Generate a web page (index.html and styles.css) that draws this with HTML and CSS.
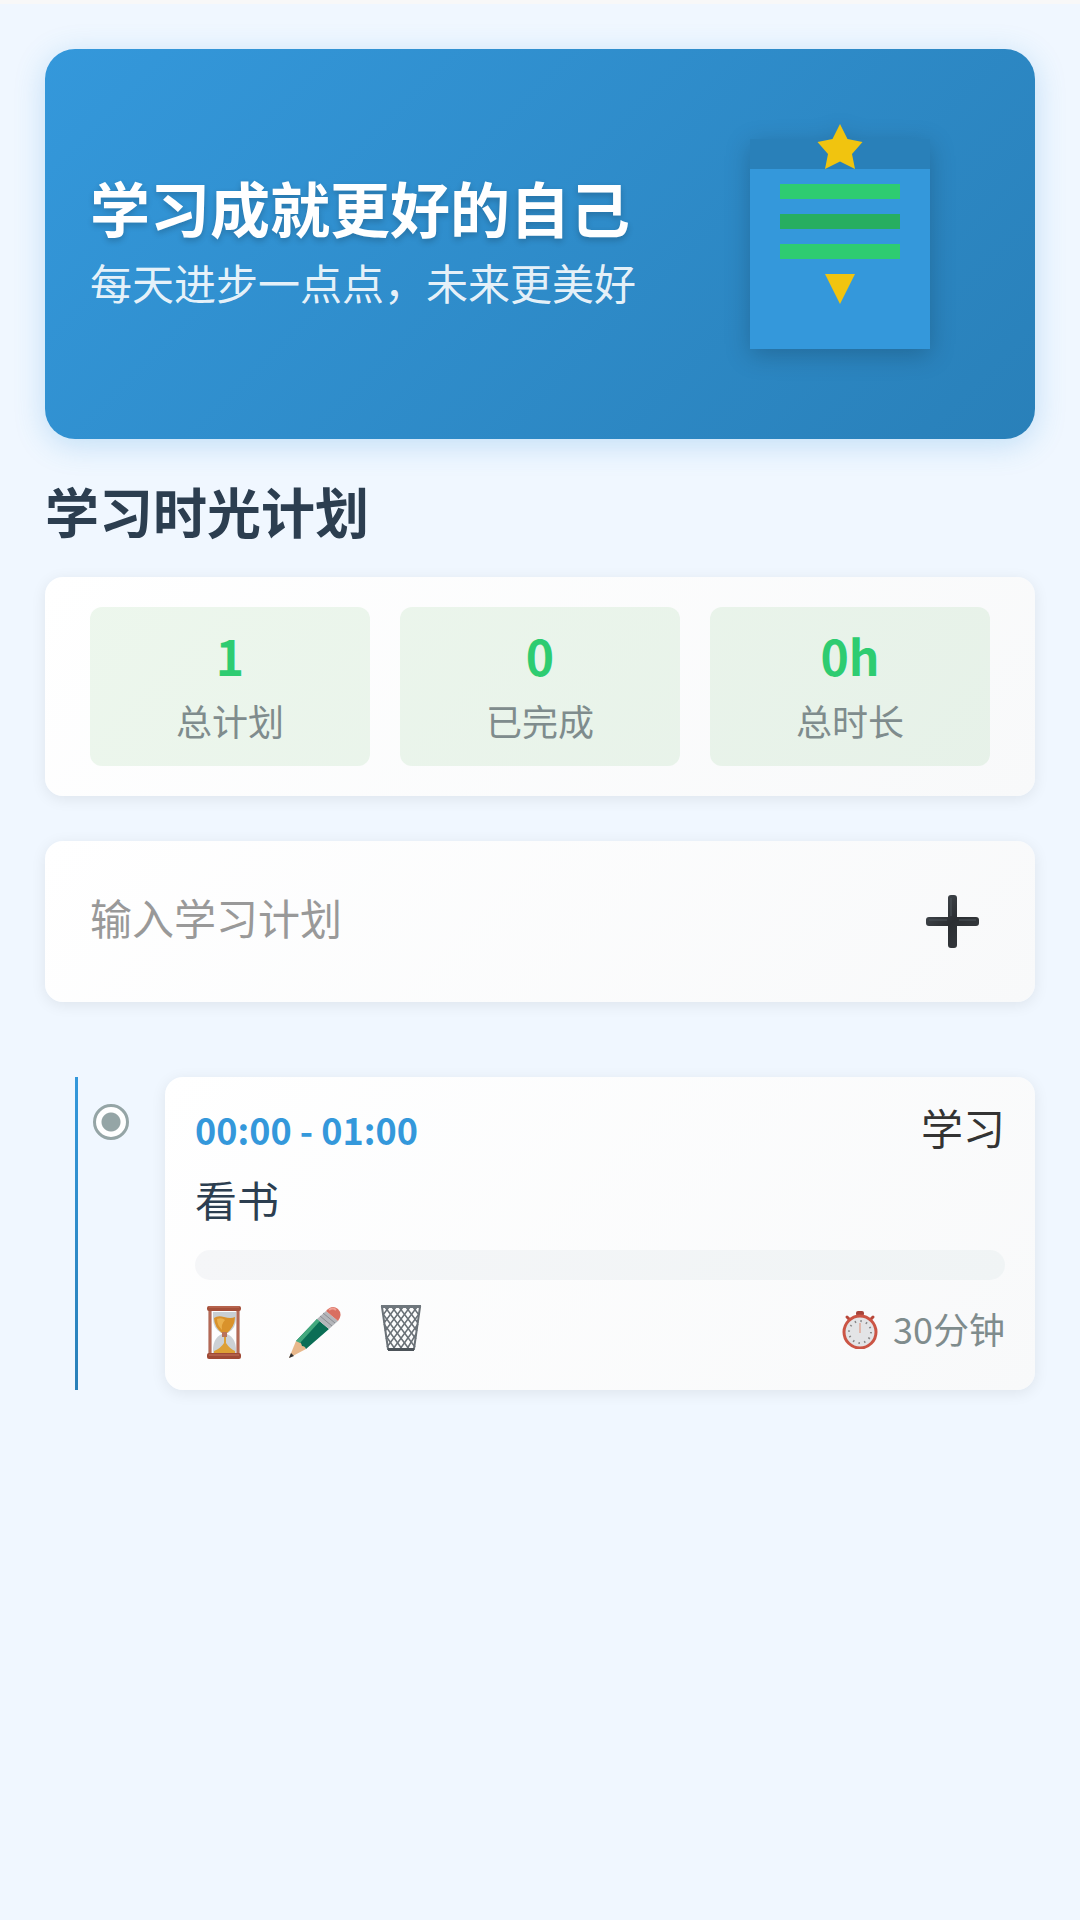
FILE: index.html
```html
<!DOCTYPE html>
<html lang="zh-CN">
<head>
    <meta charset="UTF-8">
    <meta name="viewport" content="width=device-width, initial-scale=1.0">
    <title>学习时光计划</title>
    <link rel="stylesheet" href="styles.css">
</head>
<body>

<main class="container">
    <!-- Banner -->
    <header class="banner">
        <div class="banner-text">
            <p class="banner-title">学习成就更好的自己</p>
            <p class="banner-subtitle">每天进步一点点，未来更美好</p>
        </div>
        <svg class="banner-image" viewBox="0 0 200 200" aria-hidden="true">
            <rect x="40" y="30" width="120" height="140" fill="#3498db"/>
            <rect x="40" y="30" width="120" height="20" fill="#2980b9"/>
            <rect x="60" y="60" width="80" height="10" fill="#2ecc71"/>
            <rect x="60" y="80" width="80" height="10" fill="#27ae60"/>
            <rect x="60" y="100" width="80" height="10" fill="#2ecc71"/>
            <path d="M90 120h20l-10 20z" fill="#f1c40f"/>
            <path d="M100 20l5 10 10 2-7 8 2 10-10-5-10 5 2-10-7-8 10-2z" fill="#f1c40f"/>
        </svg>
    </header>

    <h1 class="page-title">学习时光计划</h1>

    <!-- Statistics -->
    <section class="card stats">
        <div class="stat-item">
            <span class="stat-value" id="totalCount">1</span>
            <span class="stat-label">总计划</span>
        </div>
        <div class="stat-item">
            <span class="stat-value" id="doneCount">0</span>
            <span class="stat-label">已完成</span>
        </div>
        <div class="stat-item">
            <span class="stat-value" id="totalHours">0h</span>
            <span class="stat-label">总时长</span>
        </div>
    </section>

    <!-- Add a plan -->
    <form class="card add-form" onsubmit="return false">
        <input type="text" class="plan-input" placeholder="输入学习计划" aria-label="输入学习计划">
        <button type="submit" class="icon-btn add-btn" aria-label="添加">
            <svg width="61" height="61" viewBox="0 0 61 61" aria-hidden="true">
                <defs>
                    <linearGradient id="plusFill" x1="0" y1="0" x2="1" y2="1">
                        <stop offset="0" stop-color="#4a5157"/>
                        <stop offset="0.5" stop-color="#2b2e32"/>
                        <stop offset="1" stop-color="#393d41"/>
                    </linearGradient>
                </defs>
                <path d="M26 7q0-3 3-3h3q3 0 3 3v19h19q3 0 3 3v3q0 3-3 3H35v19q0 3-3 3h-3q-3 0-3-3V35H7q-3 0-3-3v-3q0-3 3-3h19z" fill="url(#plusFill)"/>
                <path d="M29 7v18M7 29h18M37 29h17" stroke="#4d555b" stroke-width="1" fill="none"/>
            </svg>
        </button>
    </form>

    <!-- Timeline -->
    <section class="timeline">
        <article class="timeline-item">
            <span class="timeline-dot"></span>
            <div class="card plan">
                <div class="plan-row plan-head">
                    <time class="plan-time">00:00 - 01:00</time>
                    <span class="plan-type">学习</span>
                </div>
                <p class="plan-name" id="planName">看书</p>
                <progress class="plan-progress" value="0" max="100" aria-labelledby="planName"></progress>
                <div class="plan-row">
                    <div class="plan-actions">
                        <button type="button" class="icon-btn" aria-label="开始">
                            <svg width="60" height="64" viewBox="0 0 60 64" aria-hidden="true">
                                <path d="M18 16h23v7q0 9-8 14h-7q-8-5-8-14z" fill="#c9cfd3"/>
                                <path d="M18 58q-1-16 9-20h5q10 4 9 20z" fill="#ccd1d5"/>
                                <path d="M19 22q4-3 10-1 7 2 11 0 0 10-9 17h-3q-9-7-9-16z" fill="#d9922b"/>
                                <path d="M22 23q5-2 8 1-4 4-3 10-5-5-5-11z" fill="#eab04c"/>
                                <path d="M29 37h2v10q4 6 9 8v3H19v-3q7-3 10-8z" fill="#dda035"/>
                                <path d="M27 36h5v5h-5z" fill="#b9735a"/>
                                <path d="M15 14v44M43 14v44" stroke="#a04f3a" stroke-width="3"/>
                                <path d="M15 14v44M43 14v44" stroke="#c98571" stroke-width="1"/>
                                <rect x="12" y="10" width="34" height="5" rx="2" fill="#a5503a"/>
                                <rect x="12" y="57" width="34" height="6" rx="2" fill="#a04a35"/>
                                <path d="M14 11h30M14 59h30" stroke="#c4745e" stroke-width="1"/>
                            </svg>
                        </button>
                        <button type="button" class="icon-btn" aria-label="编辑">
                            <svg width="60" height="64" viewBox="0 0 60 64" aria-hidden="true">
                                <path d="M4 62l7-17q7 0 10 8z" fill="#e8b88c"/>
                                <path d="M4 62l2-5 3 3z" fill="#333"/>
                                <path d="M11 45l21-22 12 10-23 20q-1-3-4-3-1-5-6-5z" fill="#0b6e55"/>
                                <path d="M11 45l21-22 3 2-20 22z" fill="#43a97e"/>
                                <path d="M32 23l9-8 12 10-9 8z" fill="#b4b6ba"/>
                                <path d="M35 20l12 10M38 17l12 10" stroke="#8b8d92" stroke-width="1"/>
                                <path d="M41 15q6-7 12-2 5 5 0 12z" fill="#d96f60"/>
                                <path d="M44 14q4-3 7 0" stroke="#f0a095" stroke-width="2" fill="none"/>
                            </svg>
                        </button>
                        <button type="button" class="icon-btn" aria-label="删除">
                            <svg width="60" height="64" viewBox="0 0 60 64" aria-hidden="true">
                                <g fill="none" stroke="#6a7177" stroke-width="1.5">
                                    <path d="M14 11L8 19M21 11L9 27M28 11L10 35M35 11L11 43M42 11L12 51M44 18L18 53M43 28L25 53M41 38L32 53"/>
                                    <path d="M38 11l6 8M31 11l12 16M24 11l18 24M17 11l24 32M10 11l30 40M8 18l26 35M9 28l18 25M11 40l9 13"/>
                                    <path d="M7 11h38l-6 42H13z" stroke-width="2"/>
                                </g>
                                <path d="M6 9h40v3H6z" fill="#6f777d"/>
                                <path d="M13 52h26v3H13z" fill="#4c5359"/>
                            </svg>
                        </button>
                    </div>
                    <span class="plan-duration">
                        <svg width="42" height="42" viewBox="0 0 42 42" aria-hidden="true">
                            <path d="M8 10l3 3M34 10l-3 3" stroke="#b8473a" stroke-width="3" stroke-linecap="round"/>
                            <rect x="17" y="4" width="8" height="5" rx="2" fill="#a8443a"/>
                            <circle cx="21" cy="25" r="16" fill="#e3e4e6" stroke="#cb5545" stroke-width="3"/>
                            <circle cx="21" cy="25" r="11" fill="none" stroke="#888" stroke-width="2" stroke-dasharray="1.5 4.26"/>
                            <path d="M21 26V16" stroke="#e08a70" stroke-width="1"/>
                        </svg>
                        30分钟
                    </span>
                </div>
            </div>
        </article>
    </section>
</main>

</body>
</html>
```
FILE: styles.css
```css
* {
    box-sizing: border-box;
    margin: 0;
    padding: 0;
}
body {
    font-family: "Noto Sans CJK SC", sans-serif;
    background-color: #f0f7ff;
    border-top: 4px solid #f8f8f8;
    color: #333;
    min-height: 100vh;
}
.container {
    padding: 45px;
}
.card {
    background: linear-gradient(135deg, #ffffff, #f8f9fa);
    border-radius: 18px;
    box-shadow: 0 3px 15px rgba(0, 0, 0, 0.08);
}

/* Banner */
.banner {
    display: flex;
    align-items: center;
    justify-content: space-between;
    padding: 45px;
    border-radius: 30px;
    background: linear-gradient(135deg, #3498db, #2980b9);
    box-shadow: 0 6px 30px rgba(52, 152, 219, 0.25);
}
.banner-text {
    padding-bottom: 6px;
}
.banner-title {
    color: white;
    font-size: 60px;
    line-height: 72px;
    font-weight: bold;
    margin-bottom: 9px;
    text-shadow: 0 3px 6px rgba(0, 0, 0, 0.2);
}
.banner-subtitle {
    color: rgba(255, 255, 255, 0.9);
    font-size: 42px;
    line-height: 60px;
}
.banner-image {
    width: 300px;
    height: 300px;
    filter: drop-shadow(0 6px 12px rgba(0, 0, 0, 0.2));
}

.page-title {
    color: #2c3e50;
    font-size: 54px;
    line-height: 78px;
    margin: 33px 0 27px;
}

/* Statistics */
.stats {
    display: flex;
    gap: 30px;
    padding: 30px 45px;
    margin-bottom: 45px;
}
.stat-item {
    flex: 1;
    display: flex;
    flex-direction: column;
    align-items: center;
    padding: 14px 15px 16px;
    border-radius: 12px;
    background-color: rgba(76, 175, 80, 0.1);
}
.stat-value {
    color: #2ecc71;
    font-size: 48px;
    line-height: 69px;
    font-weight: bold;
}
.stat-label {
    color: #7f8c8d;
    font-size: 36px;
    line-height: 60px;
}

/* Add form */
.add-form {
    display: flex;
    align-items: center;
    gap: 30px;
    padding: 45px;
    margin-bottom: 75px;
}
.plan-input {
    flex: 1;
    min-width: 0;
    border: none;
    outline: none;
    background: transparent;
    font-family: inherit;
    font-size: 42px;
    line-height: 60px;
    padding-bottom: 9px;
}
.plan-input::placeholder {
    color: #999;
}
.icon-btn {
    border: none;
    background: none;
    cursor: pointer;
}
.icon-btn svg {
    display: block;
}
.add-btn {
    padding: 5px 7px;
}

/* Timeline */
.timeline {
    margin-left: 30px;
    border-left: 3px solid;
    border-image: linear-gradient(#3498db, #2980b9) 1;
}
.timeline-item {
    display: flex;
    align-items: flex-start;
    gap: 36px;
    padding-left: 15px;
}
.timeline-dot {
    width: 36px;
    height: 36px;
    margin-top: 27px;
    border: 3px solid #95a5a6;
    border-radius: 50%;
    background: radial-gradient(circle, #95a5a6 9px, #ffffff 10px);
}
.plan {
    flex: 1;
    padding: 30px;
}
.plan-row {
    display: flex;
    align-items: center;
    justify-content: space-between;
}
.plan-head {
    align-items: flex-start;
}
.plan-time {
    color: #3498db;
    font-size: 36px;
    line-height: 44px;
    font-weight: bold;
}
.plan-type {
    font-size: 42px;
    line-height: 40px;
}
.plan-name {
    color: #2c3e50;
    font-size: 42px;
    line-height: 60px;
    margin: 18px 0 21px;
}
.plan-progress {
    display: block;
    width: 100%;
    height: 30px;
    margin-bottom: 16px;
    border: none;
    border-radius: 15px;
    overflow: hidden;
    appearance: none;
}
.plan-progress::-webkit-progress-bar {
    background: linear-gradient(135deg, #f5f6f8, #f0f4f5);
}
.plan-progress::-webkit-progress-value {
    background-color: #2ecc71;
}
.plan-actions {
    display: flex;
    gap: 30px;
}
.plan-duration {
    display: flex;
    align-items: center;
    gap: 12px;
    color: #7f8c8d;
    font-size: 36px;
    line-height: 60px;
}
```
